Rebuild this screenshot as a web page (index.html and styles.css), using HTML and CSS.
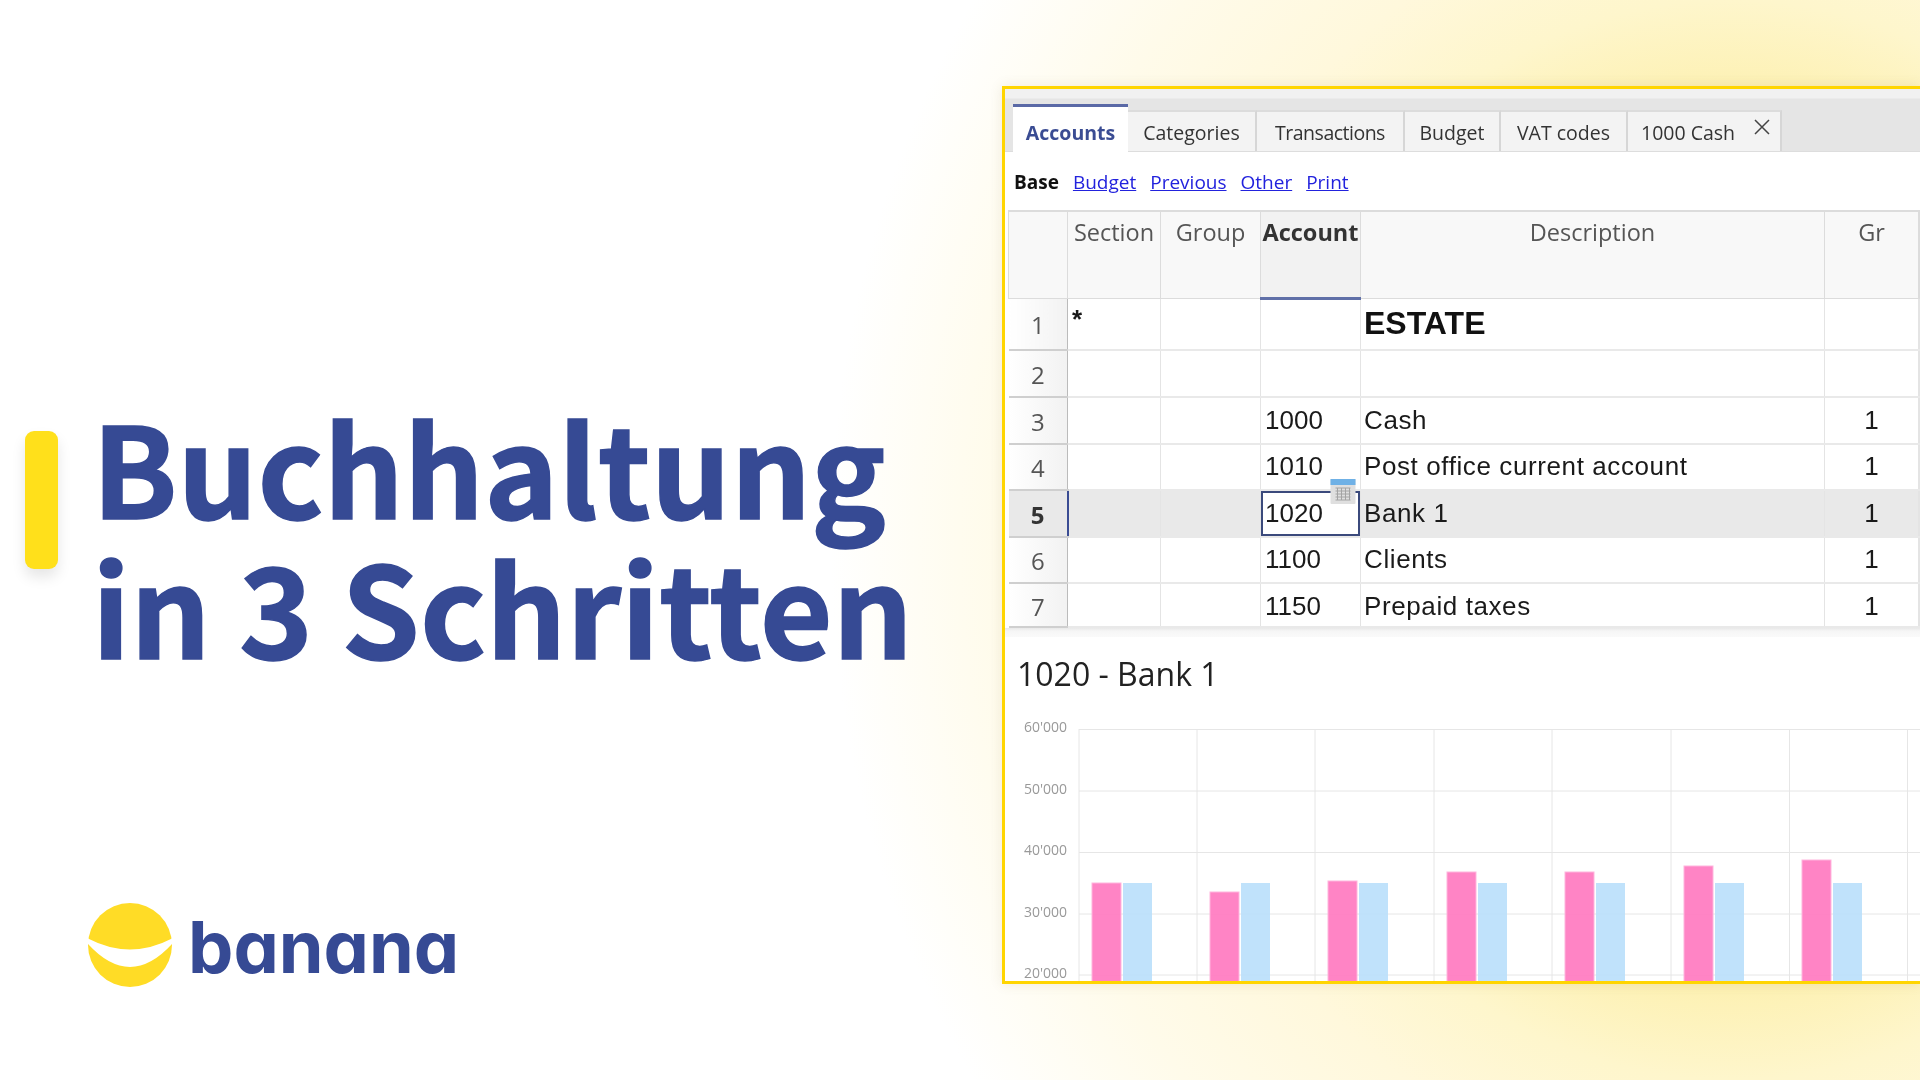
FILE: index.html
```html
<!DOCTYPE html>
<html lang="de">
<head>
    <meta charset="UTF-8">
    <meta name="viewport" content="width=device-width, initial-scale=1.0">
    <title>Buchhaltung in 3 Schritten</title>
    <link rel="stylesheet" href="styles.css">
</head>
<body>

    <section class="intro">
        <div class="hero">
            <div class="hero-mark"></div>
            <h1>Buchhaltung<br>in 3 Schritten</h1>
        </div>
        <div class="brand">
            <svg class="brand-icon" viewBox="0 0 84 84">
                <circle cx="42" cy="42" r="42" fill="#ffdc26"/>
                <path d="M-1 35 Q42 58 85 35 L85 40 Q42 88 -1 40 Z" fill="#fff"/>
            </svg>
            <span class="brand-name">banana</span>
        </div>
    </section>

    <section class="window">
        <div class="tabbar">
            <div class="tab tab-active">Accounts</div>
            <div class="tab">Categories</div>
            <div class="tab tab-tight">Transactions</div>
            <div class="tab">Budget</div>
            <div class="tab">VAT codes</div>
            <div class="tab tab-close">1000 Cash
                <svg class="close-icon" viewBox="0 0 16 16"><path d="M1 1 L15 15 M15 1 L1 15"/></svg>
            </div>
        </div>

        <div class="subtabs">
            <b>Base</b>
            <a href="#">Budget</a>
            <a href="#">Previous</a>
            <a href="#">Other</a>
            <a href="#">Print</a>
        </div>

        <table class="grid">
            <colgroup>
                <col class="col-num"><col class="col-section"><col class="col-group"><col class="col-account"><col class="col-desc"><col class="col-gr"><col>
            </colgroup>
            <thead>
                <tr>
                    <th></th>
                    <th>Section</th>
                    <th>Group</th>
                    <th class="th-active">Account</th>
                    <th>Description</th>
                    <th>Gr</th>
                    <th></th>
                </tr>
            </thead>
            <tbody>
                <tr class="row-first">
                    <th>1</th><td class="star">*</td><td></td><td></td><td class="estate">ESTATE</td><td></td><td></td>
                </tr>
                <tr class="row-second">
                    <th>2</th><td></td><td></td><td></td><td></td><td></td><td></td>
                </tr>
                <tr>
                    <th>3</th><td></td><td></td><td>1000</td><td class="desc">Cash</td><td class="center">1</td><td></td>
                </tr>
                <tr>
                    <th>4</th><td></td><td></td><td>1010</td><td class="desc">Post office current account</td><td class="center">1</td><td></td>
                </tr>
                <tr class="row-selected">
                    <th>5</th><td></td><td></td>
                    <td class="cell-active">1020
                        <svg class="cell-icon" viewBox="0 0 25 25">
                            <rect width="25" height="25" rx="1" fill="#dfdfdf"/>
                            <rect width="25" height="6" fill="#6fb1e6"/>
                            <path d="M5 9 H20 M5 12 H20 M5 15 H20 M5 18 H20 M5 21 H20 M7 9 V21 M11 9 V21 M15 9 V21 M19 9 V21" stroke="#a4a4a4" fill="none"/>
                        </svg>
                    </td>
                    <td class="desc">Bank 1</td><td class="center">1</td><td></td>
                </tr>
                <tr>
                    <th>6</th><td></td><td></td><td>1100</td><td class="desc">Clients</td><td class="center">1</td><td></td>
                </tr>
                <tr class="row-last">
                    <th>7</th><td></td><td></td><td>1150</td><td class="desc">Prepaid taxes</td><td class="center">1</td><td></td>
                </tr>
            </tbody>
        </table>
        <div class="grid-end"></div>

        <h2 class="chart-title">1020 - Bank 1</h2>

        <svg class="chart" width="915" height="281" viewBox="0 0 915 281">
            <g class="chart-lines">
                <path d="M74 28.5 H915 M74 90 H915 M74 151.5 H915 M74 213 H915 M74 274 H915"/>
                <path d="M74 28 V281 M192 28 V281 M310 28 V281 M429 28 V281 M547 28 V281 M666 28 V281 M784.5 28 V281 M902.5 28 V281"/>
            </g>
            <g class="chart-labels">
                <text x="62" y="31">60'000</text>
                <text x="62" y="93">50'000</text>
                <text x="62" y="154">40'000</text>
                <text x="62" y="216">30'000</text>
                <text x="62" y="277">20'000</text>
            </g>
            <g class="bars-pink">
                <rect x="87" y="182" width="29" height="99"/>
                <rect x="205" y="191" width="29" height="90"/>
                <rect x="323" y="180" width="29" height="101"/>
                <rect x="442" y="171" width="29" height="110"/>
                <rect x="560" y="171" width="29" height="110"/>
                <rect x="679" y="165" width="29" height="116"/>
                <rect x="797" y="159" width="29" height="122"/>
            </g>
            <g class="bars-blue">
                <rect x="118" y="182" width="29" height="99"/>
                <rect x="236" y="182" width="29" height="99"/>
                <rect x="354" y="182" width="29" height="99"/>
                <rect x="473" y="182" width="29" height="99"/>
                <rect x="591" y="182" width="29" height="99"/>
                <rect x="710" y="182" width="29" height="99"/>
                <rect x="828" y="182" width="29" height="99"/>
            </g>
        </svg>
    </section>

</body>
</html>
```

FILE: styles.css
```css
* {
    box-sizing: border-box;
}
body {
    margin: 0;
    width: 1920px;
    height: 1080px;
    overflow: hidden;
    display: flex;
    align-items: flex-start;
    background-color: #fff;
    background-image:
        radial-gradient(ellipse 900px 1000px at 1730px 540px, #fde98a 0%, #fdf1b4 45%, #fef6cc 54%, #fff8dc 65%, #fffbea 81%, #fff 100%);
    font-family: "Liberation Sans", Arial, sans-serif;
}

/* left side */
.intro {
    width: 1002px;
    height: 1080px;
    display: flex;
    flex-direction: column;
    padding: 400px 0 93px 25px;
}
.hero {
    display: flex;
    gap: 34px;
}
.hero-mark {
    flex: none;
    width: 33px;
    height: 138px;
    margin-top: 31px;
    background: #ffe01b;
    border-radius: 9px;
    box-shadow: 0 8px 14px rgba(0, 0, 0, 0.1);
}
h1 {
    margin: -6px 0 0;
    font-family: "Noto Sans CJK JP", "Noto Sans", sans-serif;
    font-weight: 700;
    font-size: 125.5px;
    line-height: 140px;
    color: #364a94;
    -webkit-text-stroke: 1.5px #364a94;
    white-space: nowrap;
}
.brand {
    margin-top: auto;
    margin-left: 63px;
    display: flex;
    align-items: center;
    gap: 16px;
}
.brand-icon {
    width: 84px;
    height: 84px;
    display: block;
}
.brand-name {
    margin-top: 4px;
    font-family: Inter, sans-serif;
    font-weight: 700;
    font-size: 72px;
    line-height: 80px;
    color: #364a94;
    font-feature-settings: "cv11" 1;
}

/* screenshot window */
.window {
    width: 918px;
    height: 898px;
    margin-top: 86px;
    border: 3px solid #ffd500;
    border-right: none;
    background: #fff;
    overflow: hidden;
    box-shadow: 0 0 12px rgba(120, 100, 40, 0.12);
    font-family: "Open Sans", sans-serif;
    color: #333;
}
/* the reference is an upscaled capture, a bit soft everywhere */
.tabbar, .subtabs, .grid, .chart-title, .chart {
    filter: blur(0.5px);
}

.tabbar {
    height: 63px;
    padding-left: 8px;
    display: grid;
    grid-template-columns: 115px 129px 148px 96px 127px 154px;
    align-items: end;
    background: linear-gradient(#f1f1f1 0, #f1f1f1 9px, #e5e5e5 10px, #e5e5e5 100%);
    border-bottom: 1px solid #ddd;
}
.tab {
    position: relative;
    height: 41px;
    padding-top: 6px;
    font-size: 19.5px;
    line-height: 30px;
    text-align: center;
    background: #f3f3f3;
    border-top: 2px solid #dcdcdc;
    border-right: 2px solid #d6d6d6;
}
.tab-tight {
    letter-spacing: -0.5px;
}
.tab-active {
    height: 48px;
    margin-bottom: -1px;
    padding-top: 11px;
    font-weight: 700;
    color: #3a4c93;
    background: #fff;
    border-top: 3px solid #5a69a6;
    border-right: none;
}
.tab-close {
    text-align: left;
    padding-left: 13px;
}
.close-icon {
    position: absolute;
    top: 7px;
    right: 10px;
    width: 16px;
    height: 16px;
}
.close-icon path {
    stroke: #444;
    stroke-width: 1.5;
    fill: none;
}

.subtabs {
    height: 58px;
    padding: 1px 0 0 9px;
    display: flex;
    align-items: center;
    gap: 14px;
    font-size: 19px;
}
.subtabs b {
    color: #111;
}
.subtabs a {
    color: #2222dd;
}

.grid {
    margin-left: 3px;
    width: 912px;
    table-layout: fixed;
    border-collapse: collapse;
    font-family: "Liberation Sans", Arial, sans-serif;
    font-size: 26px;
    color: #1a1a1a;
}
.col-num { width: 59px; }
.col-section { width: 93px; }
.col-group { width: 100px; }
.col-account { width: 100px; }
.col-desc { width: 464px; }
.col-gr { width: 94px; }

.grid thead th {
    height: 87px;
    padding: 5px 0 0;
    vertical-align: top;
    font-family: "Open Sans", sans-serif;
    font-weight: 400;
    font-size: 23.5px;
    line-height: 30px;
    color: #555;
    background: #f8f8f8;
    border: 1px solid #dcdcdc;
    border-top-width: 2px;
}
.grid thead .th-active {
    font-weight: 700;
    color: #333;
    background: #f2f2f2;
    border-bottom: 3px solid #6070a8;
}
.grid tbody th {
    padding: 2px 0 0;
    font-family: "Open Sans", sans-serif;
    font-weight: 400;
    font-size: 24px;
    color: #555;
    background: linear-gradient(90deg, #fff, #f2f2f2);
    border-bottom: 2px solid #cfcfcf;
    border-right: 1px solid #bbb;
}
.grid tbody td {
    height: 46.5px;
    padding: 0 0 0 4px;
    border-left: 1px solid #e4e4e4;
    border-right: 1px solid #e4e4e4;
    border-bottom: 2px solid #e9e9e9;
}
.grid .row-first th, .grid .row-first td {
    height: 52px;
}
.grid .row-second th, .grid .row-second td {
    height: 47px;
}
.grid .row-last th, .grid .row-last td {
    height: 44px;
    padding-top: 2px;
}
.grid .desc, .grid .estate {
    padding-left: 3px;
}
.grid .desc {
    letter-spacing: 0.6px;
}
.grid .star {
    padding-top: 0;
    vertical-align: top;
    font-weight: 700;
    font-size: 26px;
    line-height: 40px;
}
.grid .estate {
    font-weight: 700;
    font-size: 32px;
    color: #111;
}
.grid .center {
    padding-left: 0;
    text-align: center;
}
.grid .row-selected td, .grid .row-selected th {
    background: #e9e9e9;
}
.grid .row-selected th {
    font-weight: 700;
    color: #333;
    border-right: 2px solid #3a4c93;
}
.grid .row-selected .cell-active {
    position: relative;
    background: #fff;
    box-shadow: inset 0 0 0 2px #3b4a7c;
}
.cell-icon {
    position: absolute;
    top: -12px;
    right: 4px;
    width: 26px;
    height: 25px;
}

.grid-end {
    height: 9px;
    background: linear-gradient(#e8e8e8 0, #f6f6f6 3px, #fafafa 100%);
}

.chart-title {
    margin: 17px 0 6.5px 12px;
    font-weight: 400;
    font-size: 32px;
    line-height: 40px;
    color: #222;
}
.chart {
    display: block;
}
.chart-lines path {
    stroke: #e6e6e6;
    stroke-width: 1;
    fill: none;
}
.chart-labels text {
    font-size: 14px;
    fill: #999;
    text-anchor: end;
}
.bars-pink rect {
    fill: #ff7dc2;
    fill-opacity: 0.95;
    stroke: #ffb5dd;
}
.bars-blue rect {
    fill: #bbdffb;
    fill-opacity: 0.92;
}
```
